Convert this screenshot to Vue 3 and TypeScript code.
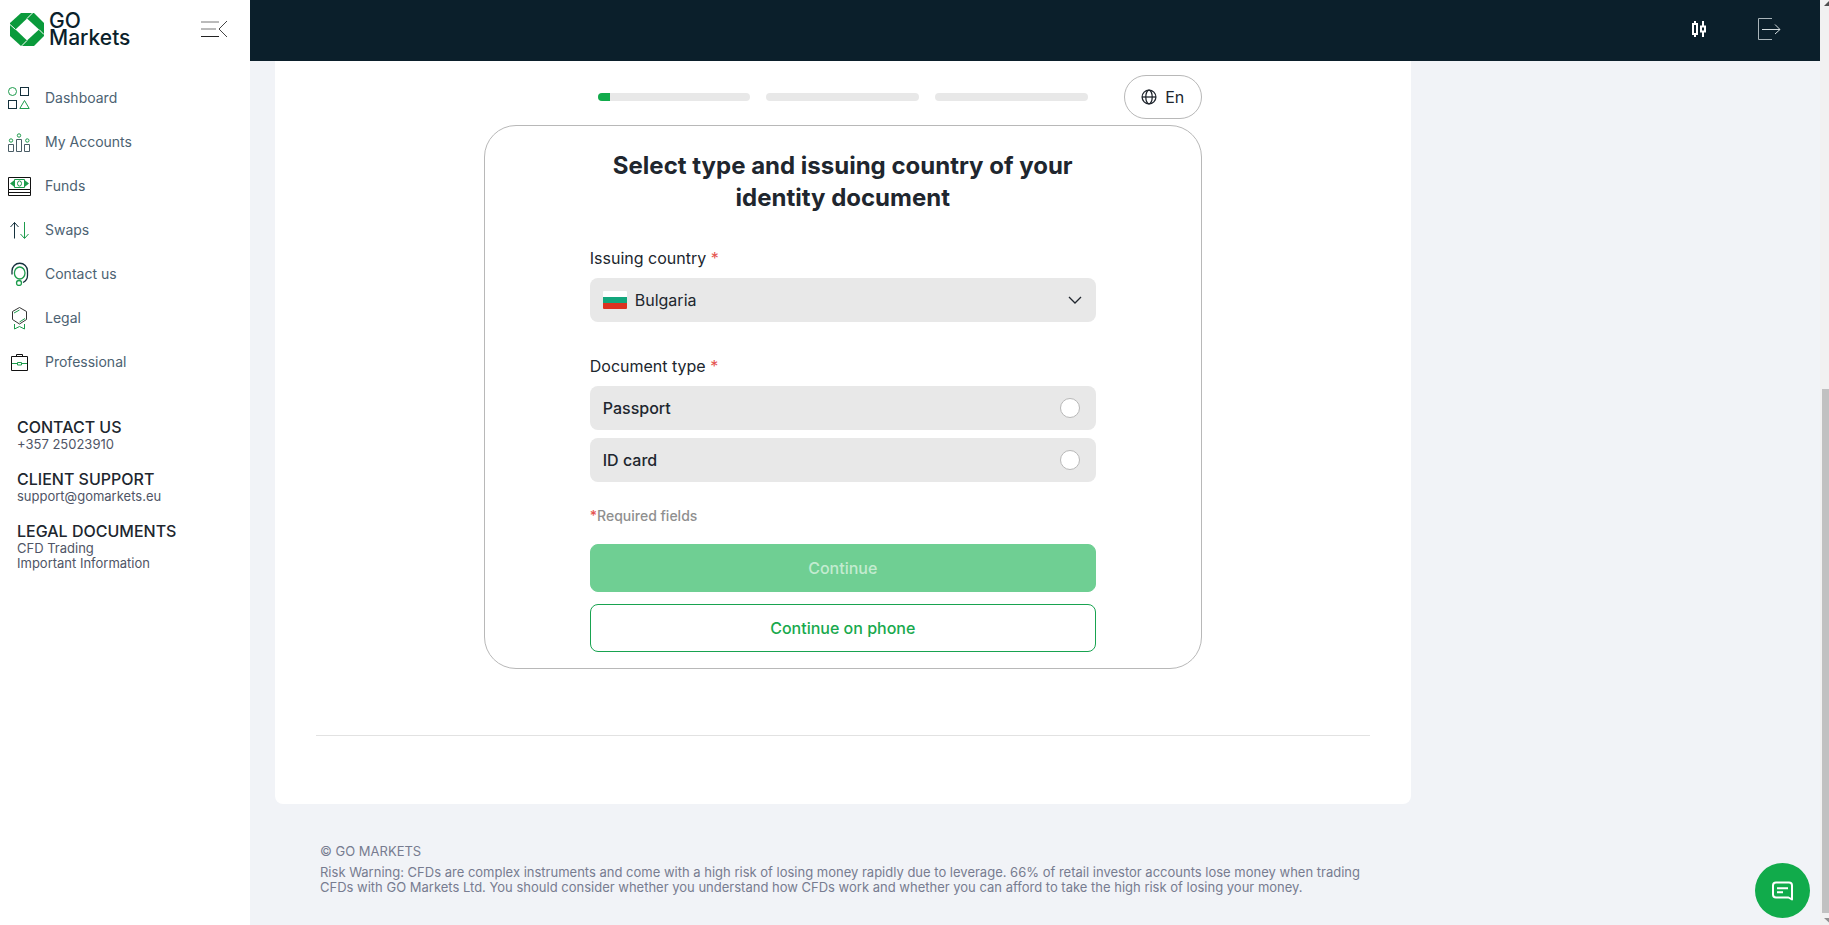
<script setup lang="ts">
import { ref } from 'vue'

interface NavItem {
  id: string
  label: string
}

interface ContactBlock {
  title: string
  links: { text: string; href: string }[]
}

const navItems: NavItem[] = [
  { id: 'dashboard', label: 'Dashboard' },
  { id: 'accounts', label: 'My Accounts' },
  { id: 'funds', label: 'Funds' },
  { id: 'swaps', label: 'Swaps' },
  { id: 'contact', label: 'Contact us' },
  { id: 'legal', label: 'Legal' },
  { id: 'professional', label: 'Professional' },
]

const contactBlocks: ContactBlock[] = [
  { title: 'CONTACT US', links: [{ text: '+357 25023910', href: 'tel:+35725023910' }] },
  { title: 'CLIENT SUPPORT', links: [{ text: 'support@gomarkets.eu', href: 'mailto:support@gomarkets.eu' }] },
  {
    title: 'LEGAL DOCUMENTS',
    links: [
      { text: 'CFD Trading', href: '#cfd' },
      { text: 'Important Information', href: '#info' },
    ],
  },
]

const steps = [8, 0, 0]
const countries = ['Bulgaria']
const country = ref('Bulgaria')
const documentTypes = ['Passport', 'ID card']
const documentType = ref('')
</script>

<template>
  <div class="app">
    <aside class="sidebar">
      <div class="brand">
        <a class="logo" href="#home">
          <svg class="logo-mark" viewBox="0 0 34 33" aria-hidden="true">
            <path d="M11 0H24L34 10V23L24 33H11L0 23V10Z" fill="#0a9a3b" />
            <path d="M17 5.500L29 16.500L17 27.500L5.500 16.500Z" fill="#fff" />
            <path d="M17 5.500L22.500 0M29 16.500L34 21.500M17 27.500L11.500 33M5.500 16.500L0 11.500" stroke="#fff" stroke-width="1" />
          </svg>
          <span class="logo-text">GO<br />Markets</span>
        </a>
        <button class="collapse" type="button" aria-label="Collapse menu">
          <svg width="28" height="18" viewBox="0 0 28 18" fill="none" stroke="#444">
            <path d="M1 2H19M1 9H16" stroke="#777" />
            <path d="M1 16.500H19" stroke="#222" />
            <path d="M27 1L19 9L27 17" />
          </svg>
        </button>
      </div>

      <nav class="nav" aria-label="Main">
        <a v-for="item in navItems" :key="item.id" class="nav-item" :href="'#' + item.id">
          <svg class="nav-icon" viewBox="0 0 24 24" fill="none" stroke="#14303c" aria-hidden="true">
            <template v-if="item.id === 'dashboard'">
              <circle cx="5.500" cy="5.500" r="4" stroke="#1d9c4c" />
              <rect x="13.500" y="1.500" width="8" height="8" />
              <rect x="1.500" y="14.500" width="8" height="8" />
              <path d="M17.500 14.500L22.200 22.500H12.800Z" stroke="#1d9c4c" />
            </template>
            <template v-else-if="item.id === 'accounts'">
              <g stroke="#1d9c4c">
                <circle cx="4" cy="10.500" r="1.700" />
                <circle cx="12" cy="5.500" r="1.700" />
                <circle cx="20.300" cy="10.500" r="1.700" />
              </g>
              <path d="M1.500 14.500H6.500V21.500H1.500ZM9.500 9.500H14.500V21.500H9.500ZM17.500 14.500H22.500V21.500H17.500Z" stroke="#4a5d66" />
            </template>
            <template v-else-if="item.id === 'funds'">
              <path d="M1.500 3.500H23.500V15.500H1.500ZM1.500 15.500V21.500H23.500V15.500M1.500 18.500H23.500" stroke="#111" />
              <path d="M7.500 5.500V13.500H17.500V5.500Z" stroke="#1d9c4c" />
              <path d="M7.500 6L3 9.500L7.500 13ZM17.500 6L22 9.500L17.500 13Z" fill="#1d9c4c" stroke="none" />
              <ellipse cx="12.500" cy="9.500" rx="2" ry="2.600" stroke="#1d9c4c" />
            </template>
            <template v-else-if="item.id === 'swaps'">
              <path d="M7.500 20.500V4.500M3.500 9L7.500 4.500L11.500 9" />
              <path d="M17.500 4V20M13.500 16L17.500 20.500L21.500 16" stroke="#1d9c4c" />
            </template>
            <template v-else-if="item.id === 'contact'">
              <path d="M5 12.500V9A7.700 7.700 0 0 1 20.500 9V13.500C20.500 17 19 19 16 20.500" stroke-width="1.300" />
              <ellipse cx="12.700" cy="11" rx="5.300" ry="6" stroke="#1d9c4c" stroke-width="1.300" />
              <circle cx="12" cy="21" r="2.500" stroke="#1d9c4c" stroke-width="1.300" />
            </template>
            <template v-else-if="item.id === 'legal'">
              <path d="M12.500 1.500L19.500 5.500V13.500L12.500 18L5.500 13.500V5.500Z" stroke="#333" />
              <path d="M7 7L12.500 4M18 12.500L12.500 16M7.500 18V23L12.500 20.500L17.500 23V18" stroke="#1d9c4c" />
            </template>
            <template v-else>
              <path d="M4.500 6.500H20.500V20.500H4.500ZM9.500 6.500V4.500H15.500V6.500" stroke="#111" />
              <path d="M5 13.500H10M15 13.500H20M10.500 12.500H14.500V15H10.500Z" stroke="#1d9c4c" />
            </template>
          </svg>
          <span>{{ item.label }}</span>
        </a>
      </nav>

      <div class="contacts">
        <section v-for="block in contactBlocks" :key="block.title" class="contact-block">
          <h2>{{ block.title }}</h2>
          <a v-for="link in block.links" :key="link.text" :href="link.href">{{ link.text }}</a>
        </section>
      </div>
    </aside>

    <div class="page">
      <header class="topbar">
        <button type="button" aria-label="Trading platform">
          <svg width="16" height="18" viewBox="0 0 16 18" fill="none" stroke="#fff" stroke-width="2">
            <path d="M2 4H6V14H2ZM4 1V4M4 14V17M10 6.500H14V11.500H10ZM12 1V6.500M12 11.500V17" />
          </svg>
        </button>
        <button type="button" aria-label="Log out">
          <svg width="24" height="24" viewBox="0 0 24 24" fill="none" stroke="#d5dde0">
            <path d="M15 1.500H1.500V22.500H15" stroke="#a9b4b9" />
            <path d="M5 12.500H23M18 7.500L23 12.500L18 17" />
          </svg>
        </button>
      </header>

      <main class="content">
        <div class="card">
          <div class="verify">
            <div class="verify-head">
              <div class="steps">
                <div v-for="(done, i) in steps" :key="i" class="step">
                  <div class="step-fill" :style="{ width: done + '%' }"></div>
                </div>
              </div>
              <button class="lang" type="button">
                <svg width="16" height="16" viewBox="0 0 16 16" fill="none" stroke="#20262e" stroke-width="1.300" aria-hidden="true">
                  <circle cx="8" cy="8" r="6.900" />
                  <ellipse cx="8" cy="8" rx="3.200" ry="6.900" />
                  <path d="M1 8H15" />
                </svg>
                <span>En</span>
              </button>
            </div>

            <form class="panel" @submit.prevent>
              <h1>Select type and issuing country of your identity document</h1>

              <div class="field">
                <label for="country">Issuing country <span class="star">*</span></label>
                <div class="select">
                  <svg class="flag" viewBox="0 0 24 18" aria-hidden="true">
                    <path d="M0 0H24V6H0Z" fill="#fff" />
                    <path d="M0 6H24V12H0Z" fill="#13a67c" />
                    <path d="M0 12H24V18H0Z" fill="#dc3220" />
                  </svg>
                  <select id="country" v-model="country">
                    <option v-for="name in countries" :key="name">{{ name }}</option>
                  </select>
                  <svg class="chevron" viewBox="0 0 14 8" fill="none" stroke="#20262e" stroke-width="1.300" aria-hidden="true">
                    <path d="M1 1L7 7L13 1" />
                  </svg>
                </div>
              </div>

              <fieldset class="field">
                <legend>Document type <span class="star">*</span></legend>
                <label v-for="type in documentTypes" :key="type" class="choice">
                  <span>{{ type }}</span>
                  <input v-model="documentType" type="radio" name="document-type" :value="type" />
                </label>
              </fieldset>

              <p class="required"><span class="star">*</span>Required fields</p>
              <button class="btn primary" type="submit" :disabled="!documentType">Continue</button>
              <button class="btn outline" type="button">Continue on phone</button>
            </form>
          </div>
          <hr />
        </div>

        <footer class="footer">
          <p>© GO MARKETS</p>
          <p>
            Risk Warning: CFDs are complex instruments and come with a high risk of losing money rapidly due to
            leverage. 66% of retail investor accounts lose money when trading CFDs with GO Markets Ltd. You should
            consider whether you understand how CFDs work and whether you can afford to take the high risk of losing
            your money.
          </p>
        </footer>
      </main>

      <button class="chat" type="button" aria-label="Open chat">
        <svg width="24" height="24" viewBox="0 0 24 24" fill="none" stroke="#fff" stroke-width="2" stroke-linejoin="round" aria-hidden="true">
          <path d="M5 3.500H18Q21 3.500 21 6.500V20.500L17.500 18.500H5Q2 18.500 2 15.500V6.500Q2 3.500 5 3.500Z" />
          <path d="M6 9.200H17M6 13.200H12" />
        </svg>
      </button>
    </div>

    <div class="scrollbar" aria-hidden="true">
      <svg width="9" height="16" viewBox="0 0 9 16"><path d="M4 6L9 1V6Z" fill="#505050" /></svg>
      <div class="thumb"></div>
      <svg width="9" height="12" viewBox="0 0 9 12"><path d="M4 5H9V9.500Z" fill="#909090" /></svg>
    </div>
  </div>
</template>

<style>
body {
  margin: 0;
}
</style>

<style scoped>
* {
  box-sizing: border-box;
}

.app {
  display: flex;
  height: 100vh;
  overflow: hidden;
  background: #f1f3f7;
  color: #20262e;
  font-family: Inter, 'Liberation Sans', sans-serif;
  font-size: 16px;
  line-height: 24px;
}

button,
select {
  font: inherit;
  color: inherit;
  cursor: pointer;
}

a {
  color: inherit;
  text-decoration: none;
}

h1,
h2,
p {
  margin: 0;
}

.sidebar {
  flex: 0 0 250px;
  background: #fff;
}

.brand {
  display: flex;
  align-items: center;
  justify-content: space-between;
  height: 58px;
  padding: 0 22px 0 10px;
}

.logo {
  display: flex;
  align-items: center;
  gap: 5px;
}

.logo-mark {
  width: 34px;
  height: 33px;
}

.logo-text {
  color: #0b1f2b;
  font-size: 21px;
  font-weight: 500;
  line-height: 17px;
}

.collapse {
  display: flex;
  padding: 0;
  border: 0;
  background: none;
}

.nav {
  padding: 18px 7px 0;
}

.nav-item {
  display: flex;
  align-items: center;
  gap: 14px;
  height: 44px;
  color: #4c6272;
  font-size: 14px;
}

.nav-icon {
  width: 24px;
  height: 24px;
}

.contacts {
  display: flex;
  flex-direction: column;
  gap: 18px;
  padding: 34px 17px 0;
}

.contact-block h2 {
  font-size: 16px;
  font-weight: 500;
  line-height: 19px;
}

.contact-block a {
  display: block;
  color: #4f5566;
  font-size: 13px;
  line-height: 15px;
}

.page {
  flex: 1;
  min-width: 0;
}

.topbar {
  display: flex;
  align-items: center;
  justify-content: flex-end;
  gap: 50px;
  height: 61px;
  padding: 0 39px 4px 0;
  background: #0b1f2b;
}

.topbar button {
  display: flex;
  padding: 0;
  border: 0;
  background: none;
}

.content {
  width: 75%;
  padding: 0 17px 0 25px;
}

.card {
  padding: 14px 41px 68px;
  border-radius: 0 0 8px 8px;
  background: #fff;
}

.verify {
  max-width: 718px;
  margin: 0 auto;
}

.verify-head {
  display: grid;
  grid-template-columns: 1fr minmax(0, 490px) 1fr;
  align-items: center;
  margin-bottom: 6px;
}

.steps {
  display: flex;
  grid-column: 2;
  gap: 16px;
}

.step {
  flex: 1;
  height: 8px;
  overflow: hidden;
  border-radius: 4px;
  background: #e8e8e8;
}

.step-fill {
  height: 100%;
  background: #11ab4b;
}

.lang {
  display: flex;
  align-items: center;
  justify-content: center;
  justify-self: end;
  gap: 8px;
  width: 78px;
  height: 44px;
  padding: 0;
  border: 1px solid #b8b8b8;
  border-radius: 22px;
  background: #fff;
}

.panel {
  padding: 24px 105px 16px;
  border: 1px solid #b8b8b8;
  border-radius: 32px;
}

h1 {
  font-size: 24px;
  font-weight: 700;
  line-height: 32px;
  text-align: center;
}

.field {
  display: flex;
  flex-direction: column;
  gap: 8px;
  min-width: 0;
  margin: 32px 0 0;
  padding: 0;
  border: 0;
}

legend {
  margin-bottom: 8px;
  padding: 0;
}

.star {
  color: #e5544f;
}

.select,
.choice {
  display: flex;
  align-items: center;
  height: 44px;
  padding: 0 13px;
  border-radius: 8px;
  background: #e8e8e8;
}

.select {
  position: relative;
}

.flag {
  width: 24px;
  height: 18px;
  border-radius: 1px;
}

.select select {
  flex: 1;
  height: 100%;
  padding: 0 0 0 8px;
  border: 0;
  background: none;
  appearance: none;
}

.chevron {
  position: absolute;
  right: 14px;
  width: 14px;
  height: 8px;
  pointer-events: none;
}

.choice {
  justify-content: space-between;
  padding-right: 16px;
  font-weight: 500;
}

.choice input {
  width: 20px;
  height: 20px;
  margin: 0;
  border: 1px solid #b8b8b8;
  border-radius: 50%;
  background: #fff;
  appearance: none;
}

.choice input:checked {
  border: 6px solid #11ab4b;
}

.required {
  margin: 24px 0 18px;
  color: #8f8f8f;
  font-size: 14px;
  font-weight: 500;
  line-height: 20px;
}

.btn {
  display: block;
  width: 100%;
  height: 48px;
  border: 1px solid #18a350;
  border-radius: 8px;
  font-weight: 500;
}

.primary {
  background: #11ab4b;
  color: #fff;
}

.primary:disabled {
  border-color: #6fcf93;
  background: #6fcf93;
  color: #c3ebd0;
}

.outline {
  margin-top: 12px;
  background: #fff;
  color: #18a94d;
}

hr {
  height: 1px;
  margin: 66px 0 0;
  border: 0;
  background: #e2e2e2;
}

.footer {
  display: flex;
  flex-direction: column;
  gap: 6px;
  padding: 40px 45px 0;
  color: #777c90;
  font-size: 13px;
  line-height: 15px;
}

.chat {
  position: fixed;
  right: 19px;
  bottom: 7px;
  display: flex;
  align-items: center;
  justify-content: center;
  width: 55px;
  height: 55px;
  padding: 0;
  border: 0;
  border-radius: 50%;
  background: #11ab4b;
}

.scrollbar {
  display: flex;
  flex: 0 0 9px;
  flex-direction: column;
  background: #f1f1f1;
}

.thumb {
  flex: 0 0 calc(57% - 3px);
  margin: auto 0 0 2px;
  background: #c1c1c1;
}
</style>
